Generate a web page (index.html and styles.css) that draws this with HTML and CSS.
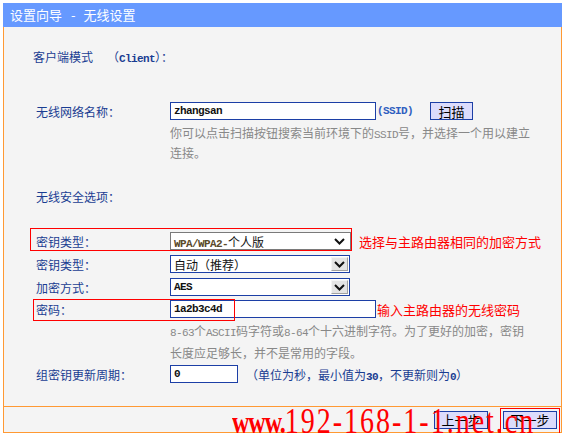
FILE: index.html
```html
<!DOCTYPE html>
<html lang="zh-CN">
<head>
<meta charset="utf-8">
<title>设置向导 - 无线设置</title>
<link rel="stylesheet" href="styles.css">
</head>
<body>
<div class="page">
  <div class="hdr">设置向导<span class="dash">-</span>无线设置</div>
  <div class="main">
    <div class="mode">客户端模式<span class="mode-v">（<span class="asc">Client</span>）：</span></div>

    <div class="row r-ssid">
      <div class="lbl">无线网络名称：</div>
      <div class="val">
        <div class="box w206"><span class="asc">zhangsan</span></div>
        <span class="asc ssid">(SSID)</span>
        <div class="btn scan">扫描</div>
      </div>
    </div>
    <div class="help h1">你可以点击扫描按钮搜索当前环境下的<span class="asc">SSID</span>号，并选择一个用以建立<br>连接。</div>

    <div class="row r-sec"><div class="lbl">无线安全选项：</div></div>

    <div class="row r-d">
      <div class="mark m1"></div>
      <div class="lbl">密钥类型：</div>
      <div class="val">
        <div class="box sel gray w181"><span><span class="asc">WPA/WPA2-</span>个人版</span>
          <svg class="chev" width="11" height="7" viewBox="0 0 11 7"><polyline points="1,1 5.5,5.5 10,1" fill="none" stroke="#111" stroke-width="2"/></svg>
        </div>
        <span class="note n1">选择与主路由器相同的加密方式</span>
      </div>
    </div>

    <div class="row r-e">
      <div class="lbl">密钥类型：</div>
      <div class="val">
        <div class="box sel w180"><span>自动（推荐）</span>
          <span class="abox"><svg width="11" height="7" viewBox="0 0 11 7"><polyline points="1,1 5.5,5.5 10,1" fill="none" stroke="#111" stroke-width="2"/></svg></span>
        </div>
      </div>
    </div>

    <div class="row r-f">
      <div class="lbl">加密方式：</div>
      <div class="val">
        <div class="box sel w180"><span class="asc">AES</span>
          <span class="abox"><svg width="11" height="7" viewBox="0 0 11 7"><polyline points="1,1 5.5,5.5 10,1" fill="none" stroke="#111" stroke-width="2"/></svg></span>
        </div>
      </div>
    </div>

    <div class="row r-g">
      <div class="mark m2"></div>
      <div class="lbl">密码：</div>
      <div class="val">
        <div class="box w206"><span class="asc">1a2b3c4d</span></div>
        <span class="note n2">输入主路由器的无线密码</span>
      </div>
    </div>
    <div class="help h2"><span class="asc">8-63</span>个<span class="asc">ASCII</span>码字符或<span class="asc">8-64</span>个十六进制字符。为了更好的加密，密钥<br>长度应足够长，并不是常用的字段。</div>

    <div class="row r-h">
      <div class="lbl">组密钥更新周期：</div>
      <div class="val">
        <div class="box w68"><span class="asc">0</span></div>
        <span class="unit">（单位为秒，最小值为<span class="asc">30</span>，不更新则为<span class="asc">0</span>）</span>
      </div>
    </div>
  </div>
  <div class="foot">
    <div class="btn fbtn">上一步</div>
    <div class="fwrap"><div class="btn fbtn">下一步</div><div class="mark m3"></div></div>
  </div>
  <div class="wm"><span class="www">www.</span>192-168-1-1.net.cn</div>
</div>
</body>
</html>
```
FILE: styles.css
```css
* { box-sizing: border-box; }
body {
  margin: 0;
  background: #fff;
  font-family: "Noto Sans CJK SC", "Liberation Sans", sans-serif;
  font-size: 12px;
  color: #1a3d92;
}
.page {
  position: relative;
  margin: 3px 0 0 3px;
  width: 559px;
  height: 430px;
  display: flex;
  flex-direction: column;
  background: #f4f4f4;
  overflow: hidden;
}
.hdr {
  height: 24px;
  background: #6699ff;
  color: #fff;
  font-size: 13px;
  line-height: 24px;
  padding-left: 7px;
}
.dash { margin: 0 8px 0 9px; }
.main {
  flex: 1;
  border-left: 1px solid #ff9933;
  border-right: 1px solid #ff9933;
  padding-left: 32px;
  display: flex;
  flex-direction: column;
}
.asc {
  font-family: "Liberation Mono", monospace;
  font-weight: bold;
  font-size: 11px;
  letter-spacing: -0.6px;
}
.mode {
  margin-top: 21px;
  margin-left: -3px;
  height: 18px;
  line-height: 18px;
}
.mode-v { margin-left: 14px; }
.row {
  position: relative;
  display: grid;
  grid-template-columns: 134px 1fr;
  align-items: center;
  height: 18px;
}
.val { display: flex; align-items: center; height: 18px; }
.r-ssid { margin-top: 36px; }
.r-sec { margin-top: 26px; }
.r-d { margin-top: 27px; }
.r-e, .r-f { margin-top: 5px; }
.r-g { margin-top: 4px; }
.r-h { margin-top: 3px; }
.help { margin-left: 134px; color: #888; }
.help .asc { font-weight: normal; }
.h1 { margin-top: 4px; line-height: 17px; }
.h2 { margin-top: 3px; line-height: 19px; }
.box {
  height: 18px;
  border: 1px solid #1c3fa6;
  background: #fff;
  padding-left: 3px;
  display: flex;
  align-items: center;
  color: #111;
}
.box .asc { color: #111; }
.sel { justify-content: space-between; padding-right: 1px; }
.gray { border-color: #7a7a7a; padding-right: 5px; }
.gray .asc { color: #5a4a2a; }
.w206 { width: 206px; }
.w181 { width: 181px; }
.w180 { width: 180px; }
.w68 { width: 68px; }
.abox {
  width: 17px;
  height: 14px;
  background: #e4e4e4;
  border: 1px solid #a0a0a0;
  border-top-color: #f4f4f4;
  border-left-color: #f4f4f4;
  display: flex;
  align-items: center;
  justify-content: center;
}
.ssid { margin-left: 1px; width: 53px; color: #3060c0; }
.btn {
  height: 18px;
  border: 1px solid #1c3fa6;
  background: #dcdcfc;
  color: #000;
  display: flex;
  align-items: center;
  justify-content: center;
}
.scan { width: 43px; font-size: 13px; }
.note { color: #ff0000; font-size: 13px; }
.n1 { margin-left: 8px; }
.n2 { margin-left: 1px; }
.unit { margin-left: 8px; }
.mark { position: absolute; border: 1px solid #ff0000; pointer-events: none; }
.m1 { left: -6px; top: -4px; width: 322px; height: 23px; }
.m2 { left: -3px; top: -1px; width: 202px; height: 22px; }
.foot {
  height: 27px;
  border: 1px solid #ff9933;
  display: flex;
  justify-content: flex-end;
  align-items: center;
  gap: 15px;
  padding-right: 4px;
}
.fbtn { width: 54px; font-size: 13px; }
.fwrap { position: relative; }
.m3 { left: -3px; top: -3px; width: 60px; height: 26px; }
.wm {
  position: absolute;
  left: 229px;
  bottom: -9px;
  color: #ff0000;
  font-family: "Liberation Serif", serif;
  font-size: 28px;
  letter-spacing: 2px;
  transform: scaleY(1.3);
  transform-origin: left bottom;
  white-space: nowrap;
  pointer-events: none;
}
.www { font-weight: bold; letter-spacing: -1px; font-size: 24px; }
```
